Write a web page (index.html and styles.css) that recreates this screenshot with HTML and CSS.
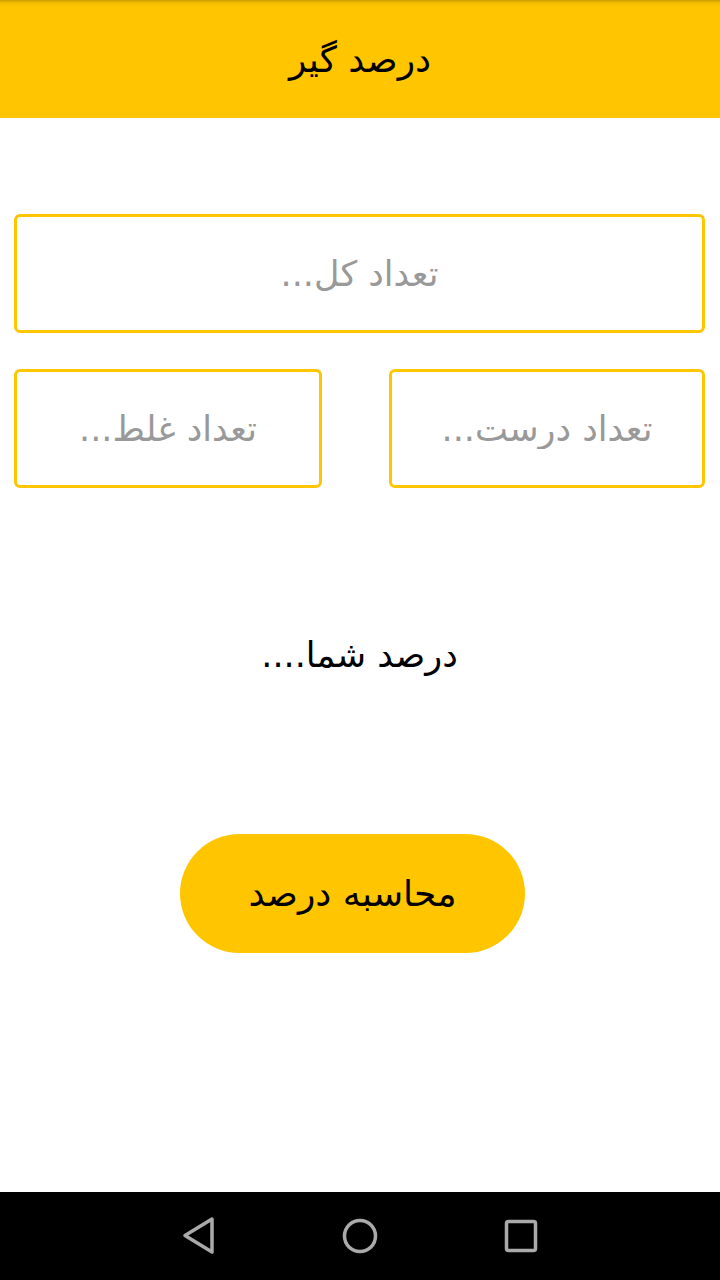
FILE: index.html
```html
<!DOCTYPE html>
<html lang="fa" dir="rtl">
<head>
  <meta charset="UTF-8" />
  <meta name="viewport" content="width=device-width, initial-scale=1.0"/>
  <title>درصد گیر</title>
  <link rel="stylesheet" href="styles.css">
</head>
<body>
  <div class="app">
    <header class="toolbar">درصد گیر</header>

    <main class="content">
      <input class="field field-total" type="text" placeholder="تعداد کل...">
      <div class="row">
        <input class="field field-right" type="text" placeholder="تعداد درست...">
        <input class="field field-wrong" type="text" placeholder="تعداد غلط...">
      </div>

      <div class="result">درصد شما....</div>

      <button class="calc">محاسبه درصد</button>
    </main>

    <nav class="navbar">
      <svg width="36" height="40" viewBox="0 0 36 40">
        <path d="M31 3 L4 19.5 L31 36 Z" fill="none" stroke="#aaa" stroke-width="3.5" stroke-linejoin="round"/>
      </svg>
      <svg width="38" height="38" viewBox="0 0 38 38">
        <circle cx="19" cy="19" r="15.5" fill="none" stroke="#aaa" stroke-width="3.5"/>
      </svg>
      <svg width="36" height="36" viewBox="0 0 36 36">
        <rect x="3.5" y="3.5" width="29" height="29" rx="2" fill="none" stroke="#aaa" stroke-width="3.5"/>
      </svg>
    </nav>
  </div>
</body>
</html>
```

FILE: styles.css
```css
* {
  margin: 0;
  padding: 0;
  box-sizing: border-box;
  font-family: 'DejaVu Sans', sans-serif;
}

body {
  background: #fff;
  width: 720px;
  height: 1280px;
  overflow: hidden;
}

.app {
  display: flex;
  flex-direction: column;
  height: 1280px;
}

.toolbar {
  height: 118px;
  background: linear-gradient(to bottom, #c99c00 0px, #f5be00 3px, #ffc600 8px, #ffc600 100%);
  color: #000;
  font-size: 36px;
  display: flex;
  align-items: center;
  justify-content: center;
}

.content {
  flex: 1;
  display: flex;
  flex-direction: column;
  align-items: center;
  padding: 96px 15px 0 14px;
}

.field {
  height: 119px;
  border: 3px solid #ffc600;
  border-radius: 6px;
  background: #fff;
  font-size: 35px;
  text-align: center;
  color: #333;
  outline: none;
}

.field::placeholder {
  color: #999;
}

.field-total {
  width: 691px;
}

.row {
  width: 691px;
  display: flex;
  justify-content: space-between;
  margin-top: 36px;
}

.field-right {
  width: 316px;
}

.field-wrong {
  width: 308px;
}

.result {
  margin-top: 145px;
  font-size: 35px;
  color: #000;
  height: 44px;
  line-height: 44px;
}

.calc {
  margin-top: 157px;
  margin-right: 14px;
  width: 345px;
  height: 119px;
  border: none;
  border-radius: 60px;
  background: #ffc600;
  color: #000;
  font-size: 36px;
  cursor: pointer;
}

.navbar {
  height: 88px;
  background: #000;
  display: flex;
  align-items: center;
  justify-content: center;
  gap: 124px;
  direction: ltr;
}
```
